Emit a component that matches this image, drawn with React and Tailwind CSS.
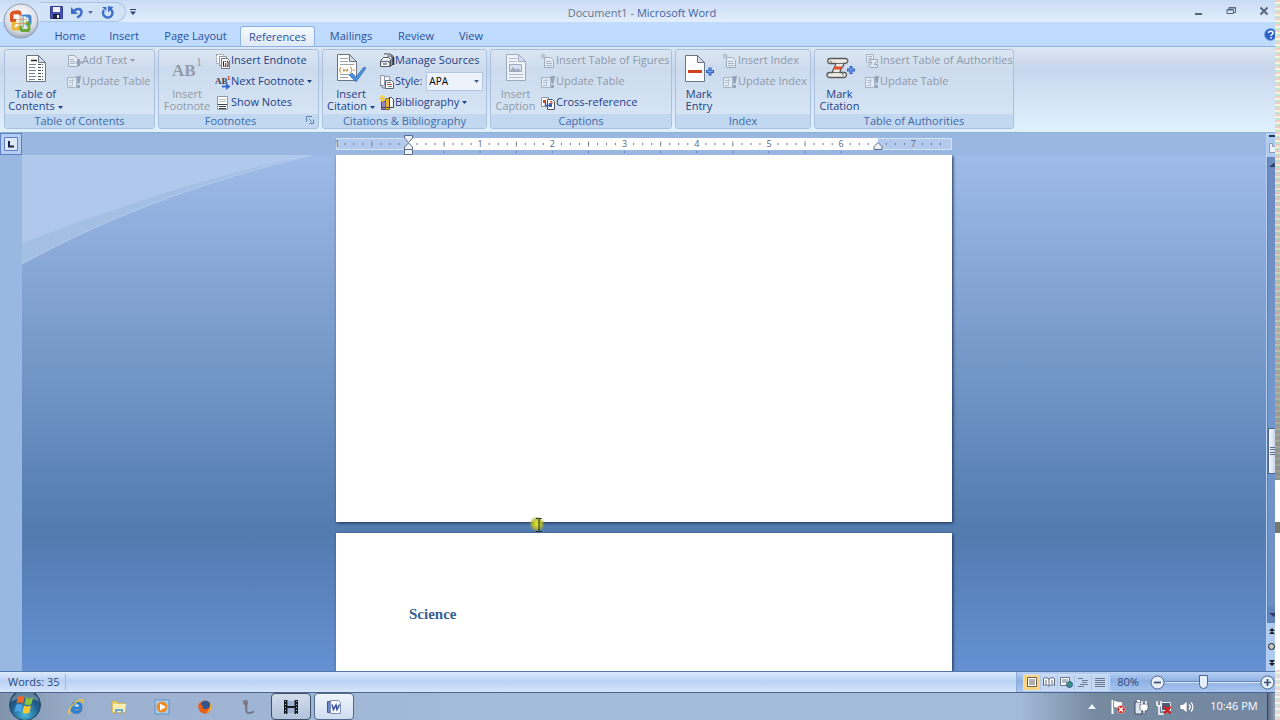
import React from "react";

function Caret({ className = "" }) {
  return (
    <svg width="5" height="3" viewBox="0 0 5 3" className={`inline-block shrink-0 ${className}`} aria-hidden="true">
      <path d="M0 0h5L2.5 3z" fill="currentColor" />
    </svg>
  );
}

/* ---------- large ribbon icons ---------- */

function Sheet({ x = 6, y = 2, w = 20, h = 27, stroke = "#6b7482" }) {
  return (
    <g>
      <path d={`M${x} ${y}h${w - 7}l7 7v${h - 7}h-${w}z`} fill="#fff" stroke={stroke} />
      <path d={`M${x + w - 7} ${y}v7h7z`} fill="#d5dce8" stroke={stroke} />
    </g>
  );
}

function TocIcon() {
  return (
    <svg width="32" height="32" viewBox="0 0 32 32">
      <Sheet x={6.5} y={2.5} w={19} h={26} />
      <path d="M11 7.5h6" stroke="#222" strokeWidth="1.5" />
      <path d="M9 11.5h7M9 14.5h6M9 17.5h7M9 20.5h6M9 23.5h7M9 26.5h6" stroke="#7a828e" />
      <path d="M18 11.5h5M18 14.500h5M18 17.5h5M18 20.5h5M18 23.5h5M18 26.5h5" stroke="#4a505a" strokeDasharray="3 1" />
    </svg>
  );
}

function FootnoteIcon() {
  return (
    <svg width="32" height="32" viewBox="0 0 32 32" fontFamily="Liberation Serif, serif" fill="#929cab">
      <text x="1" y="23" fontSize="17" fontWeight="bold">AB</text>
      <text x="25" y="13" fontSize="12">1</text>
    </svg>
  );
}

function CitationIcon() {
  return (
    <svg width="32" height="32" viewBox="0 0 32 32">
      <Sheet x={2.5} y={1.5} w={19} h={26} />
      <path d="M5 5.5h8M5 8.5h8M5 11.5h14M5 21.5h9M5 24.5h8" stroke="#9aa2ad" />
      <path d="M6 14l-1.500 3 1.500 3M15.500 14l1.500 3-1.500 3M8 16l1 2.500 1.500-2.500 1.500 2.500 1-2.500M18 17h2" fill="none" stroke="#c08a3c" />
      <path d="M14 22l3-2 4 4 8-10 2 1L21 29z" fill="#4d8fdc" stroke="#2f6cb8" strokeWidth=".7" />
    </svg>
  );
}

function CaptionIcon() {
  return (
    <svg width="32" height="32" viewBox="0 0 32 32" opacity=".65">
      <Sheet x={6.5} y={1.5} w={19} h={26} stroke="#8490a4" />
      <path d="M9 5.500h8M9 8.500h8M9 21.500h14M9 24.500h14" stroke="#a3acba" />
      <path d="M9.500 11.500h12v7h-12z" fill="#dde4ee" stroke="#8490a4" />
      <path d="M10 18l3-4 3 3 2-2 3 3z" fill="#8490a4" />
    </svg>
  );
}

function MarkEntryIcon() {
  return (
    <svg width="32" height="32" viewBox="0 0 32 32">
      <Sheet x={2.5} y={2.5} w={19} h={26} />
      <path d="M5 18.500h14" stroke="#d3401c" strokeWidth="3" />
      <path d="M27 14.500v8M23 18.500h8" stroke="#315fc0" strokeWidth="3" />
      <path d="M27 15.500v6M24 18.500h6" stroke="#7ba6ee" />
    </svg>
  );
}

function MarkCitationIcon() {
  return (
    <svg width="32" height="32" viewBox="0 0 32 32">
      <path d="M6 5.500h15c4 0 3.500 4.500 0 5h-1.500c1 4-3.500 4-3.500 9h4.500c3 0 2.500 5-.5 5H6c-4 0-4-5 0-5h2.500c0-5 4-5 3-9H6c-3 0-3-5 0-5z" fill="#eceae6" stroke="#5d5b58" strokeWidth="1.300" />
      <path d="M6 10.500c2 0 2-2.500 0-2.500M12 10.500h8M20 19.500c-2 0-2 3 0 3M8.500 19.500h8" fill="none" stroke="#6d6a66" />
      <path d="M9 16.500h8l1.500-3H10.500z" fill="#e0512d" />
      <path d="M27 13v8M23 17h8" stroke="#315fc0" strokeWidth="3" />
      <path d="M27 14v6M24 17h6" stroke="#7ba6ee" />
    </svg>
  );
}

/* ---------- small ribbon icons ---------- */

function Small({ children, faded }) {
  return (
    <svg width="16" height="16" viewBox="0 0 16 16" className="shrink-0" opacity={faded ? 0.6 : 1} aria-hidden="true">
      {children}
    </svg>
  );
}

const AddTextIcon = () => (
  <Small faded>
    <path d="M2.500 2.500h6l3 3v8h-9z" fill="#f3f6fb" stroke="#7c8798" />
    <path d="M4 6.500h4M4 8.500h5M4 10.500h5" stroke="#8a94a4" />
    <path d="M13 6v7M10 9.500h6" stroke="#6f7b8e" strokeWidth="2" />
  </Small>
);

const UpdateIcon = () => (
  <Small faded>
    <path d="M1.500 3.500h9v10h-9z" fill="#eef2f9" stroke="#8a96aa" />
    <path d="M3 6.500h5M3 8.500h4M3 11.500h4M6.500 5v7" stroke="#a5b0c2" />
    <path d="M10.500 2h4.500L13.500 9.500h-2z" fill="#6f7d95" />
    <path d="M11 11h3v3h-3z" fill="#6f7d95" />
  </Small>
);

const InsertTableIcon = () => (
  <Small faded>
    <path d="M4.500 4.500h6l3 3v7h-9z" fill="#f3f6fb" stroke="#7c8798" />
    <path d="M6 8.500h5M6 10.500h6M6 12.500h6" stroke="#8a94a4" />
    <path d="M3 0v6M0 3h6M1 1l4 4M5 1L1 5" stroke="#8f9bad" strokeWidth=".8" />
  </Small>
);

const AuthoritiesIcon = () => (
  <Small faded>
    <path d="M2.500 1.500h7v8h-7z" fill="#f3f6fb" stroke="#8a96aa" />
    <path d="M4 3.500h4M4 5.500h4M4 7.500h4" stroke="#8a94a4" />
    <path d="M6.500 6.500h7v3h-2l-1 2h3v3h-7c-2 0-2-3 0-3l1-2h-1z" fill="#e6ebf3" stroke="#7c8798" />
  </Small>
);

const EndnoteIcon = () => (
  <Small>
    <path d="M1.500 1.500h7v9h-7z" fill="#fff" stroke="#8d97a5" strokeDasharray="2 1" />
    <path d="M4.500 3.500h7v9h-7z" fill="#fff" stroke="#8d97a5" />
    <path d="M6.500 5.500h6l2 2v8h-8z" fill="#fff" stroke="#6c7582" />
    <path d="M9.500 8.500h-1v5h1M12 8.500h1v5h-1" fill="none" stroke="#222" />
    <path d="M10.700 8v1M10.700 10v4" stroke="#c02418" strokeWidth="1.300" />
  </Small>
);

const NextFootnoteIcon = () => (
  <Small>
    <text x="0" y="10" fontSize="9" fontWeight="bold" fontFamily="Liberation Serif, serif" fill="#3c4350">AB</text>
    <text x="12" y="6" fontSize="7" fontWeight="bold" fontFamily="Liberation Serif, serif" fill="#d02a1a">1</text>
    <path d="M7 11.500h4V9l4.500 3.500L11 16v-2.500H7z" fill="#3a6ccf" />
  </Small>
);

const ShowNotesIcon = () => (
  <Small>
    <path d="M2.500 1.500h10v13h-10z" fill="#fff" stroke="#8c96a6" />
    <path d="M4 4.500h7M4 6.500h7" stroke="#b9c0ca" />
    <path d="M3 9.500h9M4 11.500h7M4 13.500h7" stroke="#39414e" />
  </Small>
);

const SourcesIcon = () => (
  <Small>
    <path d="M5 1h6l3 2v8l-2 2" fill="#fff" stroke="#3c4350" />
    <path d="M8 3h5v9" fill="#e6eaf0" stroke="#3c4350" />
    <path d="M4.500 4.500L1.500 8v5.500h10V6.500l-2-2z" fill="#fff" stroke="#4c5562" />
    <path d="M1.500 8.500h9v5M4 11h4" fill="none" stroke="#6d7785" strokeWidth="1.300" />
    <path d="M14.500 4v8" stroke="#222b3a" strokeWidth="1.500" />
  </Small>
);

const StyleIcon = () => (
  <Small>
    <path d="M1.500 1.500h4v10h-4zM5.500 2.500h5v8h-5z" fill="#f4f6fa" stroke="#8f99a8" />
    <path d="M6.500 6.500h6l2 2v6h-8z" fill="#fff" stroke="#5c6675" />
    <path d="M8 8.500h4M9 12.500h4" stroke="#7f8896" />
    <path d="M8 10.500h5" stroke="#c9503c" />
    <path d="M1 11l3 3h3" fill="none" stroke="#6d7785" />
  </Small>
);

const BibliographyIcon = () => (
  <Small>
    <path d="M2.500 6.500h4v8h-4z" fill="#9a86c8" stroke="#57478a" />
    <path d="M6.500 3.500h4v11h-4z" fill="#e7b536" stroke="#8a661a" />
    <path d="M10.500 2.500h2l2 2v8h-4z" fill="#fff" stroke="#3c4350" />
    <path d="M3 12.500h3M7 12.500h3" stroke="#554126" />
    <path d="M3.500 0v7M0 3.500h7M1 1l5 5M6 1L1 6" stroke="#ecc93e" />
  </Small>
);

const CrossRefIcon = () => (
  <Small>
    <path d="M1.500 2.500h7v9h-7z" fill="#fff" stroke="#8d97a5" />
    <path d="M7.500 4.500h5l2 2v8h-7z" fill="#fff" stroke="#4c5562" />
    <path d="M3 5h3v3H3z" fill="#d3401c" />
    <path d="M5.500 8v2.500h4" fill="none" stroke="#315fc0" strokeWidth="1.500" />
    <path d="M9 8h3v4H9z" fill="#2e62bd" />
    <path d="M10 8h3M10 6.500h2" stroke="#c9503c" />
  </Small>
);

/* ---------- ribbon building blocks ---------- */

function Group({ label, width, launcher, children }) {
  return (
    <section
      aria-label={label}
      className={`flex shrink-0 flex-col overflow-hidden rounded-[3px] border border-[#a9c1dc] bg-linear-to-b from-[#dce6f2] via-[#ccdbee] via-25% to-[#d9e8f6] ${width}`}
    >
      <div className="flex h-16 shrink-0">{children}</div>
      <div className={`relative h-3.5 shrink-0 bg-[#c1d8f0] text-center leading-[14px] text-[#3e6aaa] ${launcher ? "pr-4" : ""}`}>
        {label}
        {launcher && (
          <button aria-label="Footnote options" className="absolute right-1 top-0.5">
            <svg width="8" height="8" viewBox="0 0 8 8" className="block" fill="none" stroke="#6381ad">
              <path d="M.5 6V.5H6M3 3l3 3M7.500 3.500v4h-4" />
            </svg>
          </button>
        )}
      </div>
    </section>
  );
}

function BigButton({ icon, label, width, muted, caret }) {
  return (
    <button disabled={muted} className={`flex shrink-0 flex-col items-center pt-[3px] leading-3 ${width} ${muted ? "text-[#8e99a8]" : "text-[#1e3f86]"}`}>
      {icon}
      <span className="mt-[3px] whitespace-pre">
        {label}
        {caret && <Caret className="ml-[3px] align-middle" />}
      </span>
    </button>
  );
}

function Row({ icon, label, muted, caret }) {
  return (
    <button disabled={muted} className={`flex h-[21px] items-center whitespace-nowrap ${muted ? "text-[#8e99a8]" : "text-[#1e3f86]"}`}>
      {icon}
      <span>{label}</span>
      {caret && <Caret className="ml-[3px]" />}
    </button>
  );
}

function Ribbon() {
  return (
    <div className="flex h-[87px] shrink-0 gap-[3px] overflow-hidden border-y border-t-[#8db2e3] border-b-[#8fb3cf] bg-linear-to-b from-[#dde7f3] via-[#c8d6ed] via-25% to-[#e0f1fd] pl-1 pt-0.5 pb-[3px]">
      <Group label="Table of Contents" width="w-[151px]">
        <BigButton icon={<TocIcon />} label={"Table of\nContents"} width="w-[61px]" caret />
        <div>
          <Row icon={<AddTextIcon />} label="Add Text" muted caret />
          <Row icon={<UpdateIcon />} label="Update Table" muted />
        </div>
      </Group>
      <Group label="Footnotes" width="w-[161px]" launcher>
        <BigButton icon={<FootnoteIcon />} label={"Insert\nFootnote"} width="w-[56px]" muted />
        <div>
          <Row icon={<EndnoteIcon />} label="Insert Endnote" />
          <Row icon={<NextFootnoteIcon />} label="Next Footnote" caret />
          <Row icon={<ShowNotesIcon />} label="Show Notes" />
        </div>
      </Group>
      <Group label="Citations &amp; Bibliography" width="w-[165px]">
        <BigButton icon={<CitationIcon />} label={"Insert\nCitation"} width="w-[56px]" caret />
        <div>
          <Row icon={<SourcesIcon />} label="Manage Sources" />
          <div className="flex h-[21px] items-center text-[#1e3f86]">
            <StyleIcon />
            <label htmlFor="style">Style:</label>
            <div className="relative ml-1 flex">
              <select id="style" defaultValue="APA" className="h-[19px] w-[57px] appearance-none border border-[#b3c7e1] bg-[#edf3fb] pl-0.5 text-[10px] text-black outline-none">
                <option>APA</option>
                <option>MLA</option>
                <option>Chicago</option>
              </select>
              <Caret className="pointer-events-none absolute right-1 top-2 text-[#44618f]" />
            </div>
          </div>
          <Row icon={<BibliographyIcon />} label="Bibliography" caret />
        </div>
      </Group>
      <Group label="Captions" width="w-[182px]">
        <BigButton icon={<CaptionIcon />} label={"Insert\nCaption"} width="w-[49px]" muted />
        <div>
          <Row icon={<InsertTableIcon />} label="Insert Table of Figures" muted />
          <Row icon={<UpdateIcon />} label="Update Table" muted />
          <Row icon={<CrossRefIcon />} label="Cross-reference" />
        </div>
      </Group>
      <Group label="Index" width="w-[136px]">
        <BigButton icon={<MarkEntryIcon />} label={"Mark\nEntry"} width="w-[46px]" />
        <div>
          <Row icon={<InsertTableIcon />} label="Insert Index" muted />
          <Row icon={<UpdateIcon />} label="Update Index" muted />
        </div>
      </Group>
      <Group label="Table of Authorities" width="w-[200px]">
        <BigButton icon={<MarkCitationIcon />} label={"Mark\nCitation"} width="w-[49px]" />
        <div>
          <Row icon={<AuthoritiesIcon />} label="Insert Table of Authorities" muted />
          <Row icon={<UpdateIcon />} label="Update Table" muted />
        </div>
      </Group>
    </div>
  );
}

/* ---------- title bar and tabs ---------- */

function OfficeButton() {
  return (
    <button aria-label="Office menu" className="absolute left-[3px] top-[3px] z-10">
      <svg width="36" height="36" viewBox="0 0 36 36">
        <defs>
          <radialGradient id="orb" cx=".5" cy=".35" r=".65">
            <stop offset="0" stopColor="#fff" />
            <stop offset=".7" stopColor="#dcdfe6" />
            <stop offset="1" stopColor="#9fa9ba" />
          </radialGradient>
        </defs>
        <circle cx="18" cy="18" r="17" fill="url(#orb)" stroke="#8b9bb5" />
        <g fill="none" strokeWidth="3">
          <path d="M16 9.500l-6 .5c-1.500 0-2 1-1.500 2.500V17M10 9.500c4-1 7-1.500 7 1.500" stroke="#d9541e" strokeLinecap="round" />
          <path d="M9 12v5.500h4" stroke="#d9541e" />
          <rect x="19" y="13" width="8" height="8" rx="1.500" stroke="#4687cf" />
          <rect x="10" y="20" width="6" height="6" rx="1.500" stroke="#efb62c" />
          <rect x="18" y="20" width="8" height="7.500" rx="1.500" stroke="#68a83a" />
        </g>
        <rect x="13" y="13" width="10" height="10" fill="#fff" opacity=".6" />
        <path d="M13 16.500h11M17 12.500v12M13 20.500h11M20.500 12.500v12" stroke="#d69a59" strokeWidth=".8" />
      </svg>
    </button>
  );
}

function TitleBar() {
  return (
    <header className="grid h-[22px] shrink-0 grid-cols-[1fr_auto_1fr] items-center bg-linear-to-b from-[#c9dcf5] via-[#d5e4f8] to-[#e3eefb]">
      <div className="ml-10 mt-0.5 flex h-5 w-[86px] items-center gap-2 rounded-r-full border border-l-0 border-[#aac4e6] bg-[#d2e2f7] pl-2.5 text-[#56709c]">
        <button aria-label="Save">
          <svg width="13" height="13" viewBox="0 0 13 13">
            <path d="M.5.5h12v12h-12z" fill="#4a52b0" stroke="#363c8c" />
            <path d="M3 1h7v5H3z" fill="#eef2fa" />
            <path d="M3 8h7v5H3z" fill="#1d2142" />
            <path d="M7 9h2v3H7z" fill="#fff" />
          </svg>
        </button>
        <button aria-label="Undo" className="flex items-center gap-1">
          <svg width="13" height="13" viewBox="0 0 13 13">
            <path d="M3 5.500C5 2 10.500 2 10.500 6c0 3-2 4.500-4.500 5.500" fill="none" stroke="#3d6fc9" strokeWidth="2.400" />
            <path d="M0 1v7h7z" fill="#3d6fc9" />
          </svg>
          <Caret />
        </button>
        <button aria-label="Repeat">
          <svg width="13" height="13" viewBox="0 0 13 13">
            <path d="M8.500 2.500A4.700 4.700 0 1 1 3 4" fill="none" stroke="#3d6fc9" strokeWidth="2.400" />
            <path d="M7 0v6.500L12.500 1z" fill="#3d6fc9" />
            <path d="M1 1h4.500v4z" fill="#3d6fc9" />
          </svg>
        </button>
        <button aria-label="Customize toolbar" className="ml-2 text-[#2e4369]">
          <svg width="6" height="6" viewBox="0 0 6 6">
            <path d="M0 .5h6" stroke="currentColor" />
            <path d="M0 2.500h6L3 6z" fill="currentColor" />
          </svg>
        </button>
      </div>
      <h1 className="mt-1 whitespace-nowrap pl-[9px] text-[11px] text-[#3f649f]">
        <span className="text-[#68768a]">Document1 - </span>Microsoft Word
      </h1>
      <div className="flex items-center justify-end gap-[23px] pr-1.5 text-[#56657e]">
        <button aria-label="Minimize">
          <svg width="10" height="10" viewBox="0 0 10 10"><path d="M2 8h7" stroke="currentColor" strokeWidth="2" /></svg>
        </button>
        <button aria-label="Restore">
          <svg width="10" height="10" viewBox="0 0 10 10" fill="none" stroke="currentColor">
            <path d="M3 3V1.500h6.500v5H8M3 2h6" /><path d="M1 3.500h6.500v4H1zM1 4h6" />
          </svg>
        </button>
        <button aria-label="Close">
          <svg width="10" height="10" viewBox="0 0 10 10"><path d="M1.500 1.500l7 7M8.500 1.500l-7 7" stroke="currentColor" strokeWidth="2" /></svg>
        </button>
      </div>
    </header>
  );
}

const TABS = [
  ["Home", "w-[54px]"],
  ["Insert", "w-[54px]"],
  ["Page Layout", "w-[89px]"],
  ["References", "w-[75px]"],
  ["Mailings", "w-[72px]"],
  ["Review", "w-[58px]"],
  ["View", "w-[52px]"],
];

function Tabs() {
  return (
    <nav className="flex h-6 shrink-0 items-end bg-[#bfdbff] pl-[43px]">
      {TABS.map(([name, width]) => (
        <button
          key={name}
          className={`h-5 whitespace-nowrap pt-px text-[11px] text-[#2a519a] ${width} ${
            name === "References"
              ? "rounded-t-[3px] border border-b-0 border-[#8db2e3] bg-linear-to-b from-[#f4f9ff] to-[#dfeaf7]"
              : ""
          }`}
        >
          {name}
        </button>
      ))}
      <button aria-label="Help" className="ml-auto self-center overflow-hidden">
        <svg width="11" height="13" viewBox="0 0 11 13" className="block">
          <circle cx="6.500" cy="6.500" r="6" fill="#2d62c8" stroke="#7ea2dd" />
          <path d="M4.500 5c0-2.500 4.500-2.500 4.500 0 0 1.500-2 1.500-2 3M7 9v1.500" stroke="#fff" strokeWidth="1.500" fill="none" />
        </svg>
      </button>
    </nav>
  );
}

/* ---------- document area ---------- */

function Ruler() {
  const inch = 72.2;
  const marks = [];
  for (let i = -7; i <= 59; i++) {
    const x = 72 + (i * inch) / 8;
    if (i === 0 || i === 52) continue;
    if (i % 8 === 0) {
      marks.push(<text key={i} x={x} y="9" textAnchor="middle">{Math.abs(i / 8)}</text>);
    } else if (i % 4 === 0) {
      marks.push(<path key={i} d={`M${x} 3.500v5`} stroke="#6d7b91" />);
    } else {
      marks.push(<path key={i} d={`M${x} 5v2`} stroke="#6d7b91" />);
    }
  }
  const stops = Array.from({ length: 12 }, (_, i) => 108 + i * 36.1);
  return (
    <svg width="616" height="17" viewBox="0 0 616 17" className="mx-auto block overflow-visible" fontSize="9" fontFamily="Open Sans, sans-serif" fill="#56657c">
      <rect x=".5" y=".5" width="615" height="11" fill="#b4cbed" stroke="#d0e1f8" />
      <rect x="72" y="0" width="470" height="12" fill="#fff" />
      <text x="1" y="9" textAnchor="middle">1</text>
      {marks}
      {stops.map((x) => <path key={x} d={`M${x} 13v2`} stroke="#6286bd" />)}
      <g fill="#eef2f8" stroke="#5c6d87">
        <path d="M68.500-2.500h8v2.500l-4 4.500-4-4.500z" />
        <path d="M72.500 5l4 4v2.500h-8V9z" />
        <path d="M68.500 11.500h8v5h-8z" />
        <path d="M542 4.500l4 4v3h-8v-3z" />
      </g>
    </svg>
  );
}

function Cursor() {
  return (
    <svg width="20" height="20" viewBox="0 0 20 20" className="absolute left-[192px] top-[359px] z-10">
      <defs>
        <radialGradient id="glow">
          <stop offset="0" stopColor="#e8ec30" />
          <stop offset=".6" stopColor="#b4bb26" stopOpacity=".85" />
          <stop offset="1" stopColor="#9aa02c" stopOpacity="0" />
        </radialGradient>
      </defs>
      <circle cx="9" cy="10" r="8" fill="url(#glow)" />
      <path d="M8 4.500h2.500M11 4.500h2.500M11 5v12M8 17.500h2.500M11 17.500h2.500" stroke="#20241a" />
    </svg>
  );
}

function ScrollBar() {
  return (
    <div className="flex w-[9px] shrink-0 flex-col border-l border-[#b9d1f2] bg-[#b0cbf0]">
      <button aria-label="Split" className="mt-0.5 ml-0.5 h-0.5 shrink-0 bg-[#26375c]" />
      <button aria-label="View ruler" className="my-1 h-3 shrink-0 pl-0.5">
        <svg width="6" height="11" viewBox="0 0 6 11" className="block"><path d="M.5 1.500h3v3h3v6H.5z" fill="#edf1f7" stroke="#8d9ab0" /></svg>
      </button>
      <div className="flex flex-1 flex-col border-l border-[#5e7db0] bg-linear-to-b from-[#6c8abf] via-[#7397cc] to-[#6b8fc4]">
        <button aria-label="Scroll up" className="flex h-4 items-center justify-end text-[#2c3f68]">
          <svg width="6" height="4" viewBox="0 0 6 4"><path d="M0 4l5-4 1 1v3z" fill="currentColor" /></svg>
        </button>
        <div className="grow-[258]" />
        <div className="flex h-[46px] items-center justify-end border border-r-0 border-[#4a618c] bg-linear-to-r from-[#f4f7fc] to-[#ccd8ec]">
          <svg width="5" height="9" viewBox="0 0 5 9"><path d="M0 .5h5M0 2.500h5M0 5.500h5M0 7.500h5" stroke="#5d6e8c" /></svg>
        </div>
        <div className="grow-[134]" />
        <button aria-label="Scroll down" className="flex h-4 items-center justify-end bg-[#6183bb] text-[#2c3f68]">
          <svg width="6" height="4" viewBox="0 0 6 4"><path d="M0 0h6v3L5 4z" fill="currentColor" /></svg>
        </button>
      </div>
      <div className="flex h-12 flex-col items-end justify-around text-[#171c26]">
        <button aria-label="Previous page">
          <svg width="6" height="6" viewBox="0 0 6 6"><path d="M0 3l3-3 3 3zM0 6l3-3 3 3z" fill="currentColor" /></svg>
        </button>
        <button aria-label="Select browse object">
          <svg width="7" height="7" viewBox="0 0 7 7"><circle cx="3.500" cy="3.500" r="3" fill="#c8c8c4" stroke="currentColor" /></svg>
        </button>
        <button aria-label="Next page">
          <svg width="6" height="6" viewBox="0 0 6 6"><path d="M0 0l3 3 3-3zM0 3l3 3 3-3z" fill="currentColor" /></svg>
        </button>
      </div>
    </div>
  );
}

function Workspace() {
  return (
    <div className="flex min-h-0 flex-1">
      <div className="w-[22px] shrink-0 bg-[#99b8e1]">
        <button aria-label="Tab selector" className="grid h-[22px] w-full place-items-center border border-[#5f80c4] bg-[#b5cdf2]">
          <svg width="14" height="14" viewBox="0 0 14 14">
            <path d="M.5.5h13v13H.5z" fill="#dde9fa" stroke="#5f80c4" />
            <path d="M5 4v5.500h5" fill="none" stroke="#1c2540" strokeWidth="2" />
          </svg>
        </button>
      </div>
      <main className="flex min-w-0 flex-1 flex-col">
        <div className="h-[22px] shrink-0 bg-[#99b7e0] pt-[5px]">
          <Ruler />
        </div>
        <div className="relative flex flex-1 flex-col overflow-hidden bg-linear-to-b from-[#9fbbe8] via-[#527baf] via-73% to-[#6590d2]">
          <svg width="292" height="112" viewBox="0 0 292 112" className="absolute left-0 top-0">
            <path d="M0 0h290C190 24 95 57 0 109z" fill="#a3bfe3" />
            <path d="M0 0h290C190 20 95 52 0 88z" fill="#b0c8eb" />
            <path d="M290 0C190 24 95 57 0 109" fill="none" stroke="#b9d0ee" strokeWidth=".8" />
          </svg>
          <div className="relative mx-auto flex w-[616px] flex-1 flex-col gap-[11px]">
            <article aria-label="Page 1" className="h-[367px] shrink-0 bg-white shadow-[1px_1px_3px_#1c2f52]" />
            <article aria-label="Page 2" className="relative flex-1 bg-white px-[73px] pt-[71px] shadow-[1px_1px_3px_#1c2f52]">
              <h2 className="font-['Liberation_Serif',serif] text-[15px] font-bold leading-5 text-[#365f91]">Science</h2>
            </article>
            <Cursor />
          </div>
        </div>
      </main>
      <ScrollBar />
    </div>
  );
}

/* ---------- status bar ---------- */

const VIEWS = [
  ["Print Layout", <path key="p" d="M2.500 1.500h9v9h-9zM4 4h6M4 6h6M4 8h6" fill="#fff" stroke="#67635a" />],
  ["Full Screen Reading", <path key="p" d="M7 3C5 1.500 3 1.500 1.500 2.500v7C3 8.500 5 8.500 7 10c2-1.500 4-1.500 5.500-.5v-7C11 1.500 9 1.500 7 3v7M3 5h2M9 5h2M3 7h2M9 7h2" fill="#fff" stroke="#5c6a80" />],
  ["Web Layout", <g key="p"><path d="M1.500 1.500h9v8h-9zM3 4h6M3 6h5" fill="#fff" stroke="#67758c" /><circle cx="10.500" cy="8.500" r="3" fill="#3e8f83" stroke="#35618e" /></g>],
  ["Outline", <path key="p" d="M2 2.500h5M6 4.500h6M6 6.500h5M4 8.500h8M2 10.500h6" fill="none" stroke="#6d7c96" />],
  ["Draft", <path key="p" d="M2 2.500h10M2 4.500h10M2 6.500h10M2 8.500h10M2 10.500h10" fill="none" stroke="#6a7689" />],
];

function ZoomButton({ label, plus }) {
  return (
    <button aria-label={label} className="shrink-0">
      <svg width="15" height="15" viewBox="0 0 15 15">
        <circle cx="7.500" cy="7.500" r="6.500" fill="#e6eefa" stroke="#54698f" />
        <path d={plus ? "M4 7.500h7M7.500 4v7" : "M4 7.500h7"} stroke="#3d4f70" strokeWidth="1.700" />
      </svg>
    </button>
  );
}

function StatusBar() {
  return (
    <footer className="flex h-[21px] shrink-0 items-center border-t border-[#5477ad] bg-linear-to-b from-[#dceafc] via-[#b9d2f5] via-45% to-[#d5e5fb] text-[#2c477f]">
      <span className="ml-2 w-[57px]">Words: 35</span>
      <span className="h-4 w-px bg-[#9bb9e2]" />
      <div className="ml-auto flex h-full items-center border-l border-[#8fadd9] bg-linear-to-b from-[#b8d0f4] via-[#8fb1e3] via-45% to-[#a9c6f0] pl-1.5">
        <div className="flex h-[17px] w-[87px] border border-[#cfe0f8] bg-[#c5d8f3]">
          {VIEWS.map(([name, drawing], i) => (
            <button key={name} aria-label={name} className={`grid flex-1 place-items-center border-r border-[#aec6e8] ${i === 0 ? "bg-[#fbd481]" : ""}`}>
              <svg width="14" height="12" viewBox="0 0 14 12">{drawing}</svg>
            </button>
          ))}
        </div>
        <button className="w-10 pr-1 text-center">80%</button>
        <ZoomButton label="Zoom out" />
        <input
          type="range"
          aria-label="Zoom"
          min="0"
          max="100"
          defaultValue="40"
          className="h-3.5 w-[95px] appearance-none bg-[linear-gradient(#6784b4,#6784b4),linear-gradient(#dbe8fa,#dbe8fa)] bg-[length:100%_1px,100%_1px] bg-[position:0_6px,0_7px] bg-no-repeat [&::-webkit-slider-thumb]:h-3.5 [&::-webkit-slider-thumb]:w-[9px] [&::-webkit-slider-thumb]:appearance-none [&::-webkit-slider-thumb]:rounded-b-full [&::-webkit-slider-thumb]:border [&::-webkit-slider-thumb]:border-[#52678f] [&::-webkit-slider-thumb]:bg-[#e4edfa]"
        />
        <ZoomButton label="Zoom in" plus />
      </div>
    </footer>
  );
}

/* ---------- taskbar ---------- */

function StartOrb() {
  return (
    <svg width="34" height="28" viewBox="0 0 34 28">
      <defs>
        <radialGradient id="start" cx=".5" cy=".8" r=".8">
          <stop offset="0" stopColor="#49b9dc" />
          <stop offset=".55" stopColor="#22618f" />
          <stop offset="1" stopColor="#1b3b5e" />
        </radialGradient>
      </defs>
      <circle cx="17" cy="12" r="15.500" fill="url(#start)" stroke="#274a6c" />
      <path d="M2.500 9A15 15 0 0 1 31.500 9C24 4 10 4 2.500 9z" fill="#fff" opacity=".3" />
      <path d="M10 4c2-1.500 4-1.500 6.500 0L15 10.500c-2-1.500-4-1.500-6.500 0z" fill="#ef6a2b" />
      <path d="M18 4.500c2 1.300 4 1.300 7 0L23.500 11c-2.500 1.300-4.500 1.300-7 0z" fill="#8cc63f" />
      <path d="M8 12c2.500-1.500 4.500-1.500 6.500 0L13 19c-2-1.500-4-1.500-6.500 0z" fill="#4aa4e8" />
      <path d="M16 12.500c2 1.300 4 1.300 7 0L21.500 19.500c-2.500 1.300-4.500 1.300-7 0z" fill="#fbc92e" />
    </svg>
  );
}

const Icon16 = ({ children }) => (
  <svg width="16" height="16" viewBox="0 0 16 16">{children}</svg>
);

const PINNED = [
  ["Internet Explorer", <Icon16 key="i"><path d="M3 9.500C3 3 8 2.500 10 3c3 .5 4.500 3 4 7H6.500c.5 2.500 3 2.500 4.500 1h3C12 16 3 16 3 9.500z" fill="#2d85d6" stroke="#1c5ea8" strokeWidth=".5" /><path d="M6.500 7.500h4.500c0-3-4-3-4.500 0z" fill="#dcebf8" /><path d="M2.500 14.500C-1 15 1 8.500 7 4s9-4 7.500 0" fill="none" stroke="#efc53a" strokeWidth="1.500" /></Icon16>],
  ["Explorer", <Icon16 key="i"><path d="M1 2h5l1 2h7v10H1z" fill="#e9cf71" stroke="#bd9f48" strokeWidth=".6" /><path d="M2 5h13l-1 8H2z" fill="#f8ecae" /><path d="M4 14v-4h8v4h-2v-2H6v2z" fill="#6ba7d8" /></Icon16>],
  ["Media Player", <Icon16 key="i"><path d="M1 1h14v14H1z" fill="#a9cdee" stroke="#5f91c3" /><circle cx="8" cy="8" r="5.500" fill="#f08a22" /><path d="M6 4.500v7L12 8z" fill="#fff" /></Icon16>],
  ["Firefox", <Icon16 key="i"><circle cx="8" cy="8" r="6.500" fill="#e65c19" /><circle cx="8.500" cy="6.500" r="4.800" fill="#30558f" /><path d="M2 3c0 3 3 2.500 4 4-1.500 1 0 3.500 3 3 2 0 4-1.500 4-4 3 4-1 8.500-5 8.500S0 10 2 3z" fill="#ea6018" /><path d="M13.500 3.500c2.500 5-.5 9.500-4.500 10.500 3-2 4.500-5 4.500-10.500z" fill="#f9cb3e" /></Icon16>],
  ["Recorder", <Icon16 key="i"><path d="M6 3v6c0 5 2 6.500 8 3.500" fill="none" stroke="#6c7482" strokeWidth="1.800" /><rect x="3" y="1" width="5" height="5" rx="2" fill="#777f8c" /><path d="M4.500 6.500h3v4h-2z" fill="#777f8c" /><path d="M5 5h3" stroke="#d24a3b" /></Icon16>],
];

const RedX = ({ x, y }) => (
  <g>
    <circle cx={x} cy={y} r="4" fill="#d02c2c" stroke="#f0c4c4" strokeWidth=".5" />
    <path d={`M${x - 2} ${y - 2}l4 4M${x + 2} ${y - 2}l-4 4`} stroke="#fff" strokeWidth="1.300" />
  </g>
);

const TRAY = [
  ["Action Center", <Icon16 key="i"><path d="M2.500 1v14" stroke="#fff" strokeWidth="2" /><path d="M3.500 2c3-1 4 1.500 9 .5V9c-4 1-6-1-9 0z" fill="#fff" stroke="#5c6776" strokeWidth=".6" /><RedX x={11} y={10.500} /></Icon16>],
  ["Power", <Icon16 key="i"><path d="M2 3h7v12H2z" fill="#dfe6ef" stroke="#3f4b5d" /><path d="M4 1h3v2H4z" fill="#fff" /><path d="M7 5h8v4c0 2-2 3-3 3v3h-2v-3c-2 0-3-1-3-3z" fill="#fff" stroke="#3f4b5d" strokeWidth=".7" /><path d="M9 2v3M13 2v3" stroke="#fff" strokeWidth="1.500" /></Icon16>],
  ["Network", <Icon16 key="i"><path d="M5.500 3.500h9v8h-9z" fill="#4c5d76" stroke="#e7edf5" /><path d="M1 2v4c0 1 4 1 4 0V2M3 7v8h5" fill="none" stroke="#fff" strokeWidth="1.500" /><path d="M8 7.500l6.500 7M14.500 7.500l-6.500 7" stroke="#d02020" strokeWidth="2.500" /></Icon16>],
  ["Volume", <Icon16 key="i"><path d="M1 5.500h3L8 2v12l-4-3.500H1z" fill="#fff" stroke="#5a6678" strokeWidth=".6" /><path d="M10 5.500c1.500 1.500 1.500 3.500 0 5M12 3.500c2.500 2.500 2.500 6.500 0 9" fill="none" stroke="#fff" strokeWidth="1.200" /></Icon16>],
];

function Taskbar() {
  return (
    <div className="flex h-7 shrink-0 items-center border-t border-[#4b658c] bg-[linear-gradient(90deg,#8194ac_0,#9cb1cf_90px,#a4bbdb_40%,#a3bad9_80%,#75899f_86%,#7488a4_100%)] text-white">
      <button aria-label="Start" className="ml-2 mr-2.5 h-7 w-[34px]"><StartOrb /></button>
      {PINNED.map(([name, icon]) => (
        <button key={name} aria-label={name} className="grid h-full w-[43px] place-items-center pl-1">{icon}</button>
      ))}
      <button aria-label="Movie Maker" className="ml-1 grid h-full w-10 place-items-center rounded-sm border border-[#3e5069] bg-linear-to-b from-[#d2dceb] to-[#b2c3dc]">
        <Icon16><path d="M1 1h3.500v14H1zM11.500 1H15v14h-3.500zM4 7h8v2H4z" fill="#111820" /><path d="M2.500 2v13M13.500 2v13" stroke="#dfe6f0" strokeDasharray="1 2" strokeWidth=".8" /><path d="M5 2h6v5H5zM5 9h6v5H5z" fill="#9fb4d4" /></Icon16>
      </button>
      <button aria-label="Document1 - Microsoft Word" className="ml-[3px] grid h-full w-10 place-items-center rounded-sm border border-[#52698c] bg-linear-to-b from-[#f0f5fc] to-[#cfdcf0]">
        <Icon16>
          <path d="M1.500 2.500h9v11h-9z" fill="#6d87c8" stroke="#45589c" />
          <path d="M4.500 1.500h8l2 2v11h-10z" fill="#f8faff" stroke="#7a8dbd" />
          <path d="M6 5.500l1.500 5L10 6l1 4.500 2.500-5" fill="none" stroke="#3b4fa0" strokeWidth="1.500" />
        </Icon16>
      </button>
      <div className="ml-auto flex h-full items-center">
        <button aria-label="Show hidden icons" className="mr-3.5">
          <svg width="8" height="5" viewBox="0 0 8 5"><path d="M0 5l4-5 4 5z" fill="#eef3f9" /></svg>
        </button>
        <div className="flex gap-[7px]">
          {TRAY.map(([name, icon]) => <button key={name} aria-label={name}>{icon}</button>)}
        </div>
        <time className="w-[72px] whitespace-nowrap pl-1.5 text-center">10:46 PM</time>
        <button aria-label="Show desktop" className="h-full w-2 border-l border-[#39475d] bg-linear-to-r from-[#5d6d86] to-[#8f9fb6]" />
      </div>
    </div>
  );
}

/* Sliver of the screen that shows beside the window. */
function ScreenEdge() {
  return (
    <div className="flex w-[5px] shrink-0 flex-col bg-white">
      <div className="grow-[480] bg-[linear-gradient(rgba(60,70,70,0)_25%,rgba(60,70,70,.5)),repeating-linear-gradient(#f0cfcb_0_2px,#f7f3d8_2px_4px,#c4e4d4_4px_6px)]" />
      <div className="grow-[42]" />
      <div className="grow-[11] bg-[#75796b]" />
      <div className="grow-[137]" />
      <div className="grow-[50] bg-[repeating-linear-gradient(#ead5d6_0_2px,#f6f1e6_2px_4px,#d3e4dc_4px_6px)]" />
    </div>
  );
}

export default function App() {
  return (
    <div className="flex h-screen overflow-hidden font-['Open_Sans','Noto_Sans',sans-serif] text-[11px]">
      <div className="relative flex min-w-0 flex-1 flex-col">
        <OfficeButton />
        <TitleBar />
        <Tabs />
        <Ribbon />
        <Workspace />
        <StatusBar />
        <Taskbar />
      </div>
      <ScreenEdge />
    </div>
  );
}
